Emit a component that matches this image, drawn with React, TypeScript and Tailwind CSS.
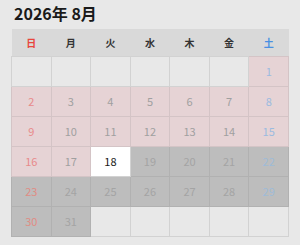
import React from "react";

type Cell = { d?: number; kind: "empty" | "pink" | "gray" | "today" };

const heads = ["日", "月", "火", "水", "木", "金", "土"];

function buildRows(): Cell[][] {
  const cells: Cell[] = [];
  for (let i = 0; i < 6; i++) cells.push({ kind: "empty" });
  for (let d = 1; d <= 31; d++) {
    let kind: Cell["kind"] = "pink";
    if (d === 18) kind = "today";
    else if (d > 18) kind = "gray";
    cells.push({ d, kind });
  }
  while (cells.length < 42) cells.push({ kind: "empty" });
  const rows: Cell[][] = [];
  for (let i = 0; i < 42; i += 7) rows.push(cells.slice(i, i + 7));
  return rows;
}

export default function App() {
  const rows = buildRows();
  return (
    <div
      className="w-[300px] h-[245px] bg-[#e8e8e8] overflow-hidden"
      style={{ fontFamily: '"Noto Sans CJK JP", "Noto Sans", sans-serif' }}
    >
      <div className="pl-[14px] pt-[3px] h-[29px] text-[16px] leading-[20px] font-bold text-[#1a1a1a]">
        2026年 8月
      </div>
      <table className="ml-[11px] w-[278px] table-fixed border-collapse">
        <thead>
          <tr className="bg-[#d9d9d9] h-[27px]">
            {heads.map((h, i) => (
              <th
                key={h}
                className={
                  "text-[10px] font-bold p-0 " +
                  (i === 0 ? "text-[#e8463c]" : i === 6 ? "text-[#4a90e2]" : "text-[#333333]")
                }
              >
                {h}
              </th>
            ))}
          </tr>
        </thead>
        <tbody>
          {rows.map((r, ri) => (
            <tr key={ri} className="h-[30px]">
              {r.map((c, ci) => {
                let bg = "bg-[#e8e8e8]";
                let border = "border-[#d2d2d2]";
                if (c.kind === "pink") {
                  bg = "bg-[#e6d3d5]";
                  border = "border-[#d4c4c6]";
                } else if (c.kind === "gray") {
                  bg = "bg-[#bdbdbd]";
                  border = "border-[#b1b1b1]";
                } else if (c.kind === "today") {
                  bg = "bg-white";
                  border = "border-[#d2d2d2]";
                }
                let color = "text-[#a0a0a0]";
                if (c.kind === "today") color = "text-[#1a1a1a]";
                else if (c.kind === "gray") {
                  color = ci === 0 ? "text-[#e08c84]" : ci === 6 ? "text-[#9dbbd8]" : "text-[#a4a4a4]";
                } else {
                  color = ci === 0 ? "text-[#e88a8a]" : ci === 6 ? "text-[#9bbbe0]" : "text-[#a0a0a0]";
                }
                return (
                  <td
                    key={ci}
                    className={`border ${border} ${bg} ${color} text-center text-[11px] p-0`}
                  >
                    {c.d ?? ""}
                  </td>
                );
              })}
            </tr>
          ))}
        </tbody>
      </table>
    </div>
  );
}
